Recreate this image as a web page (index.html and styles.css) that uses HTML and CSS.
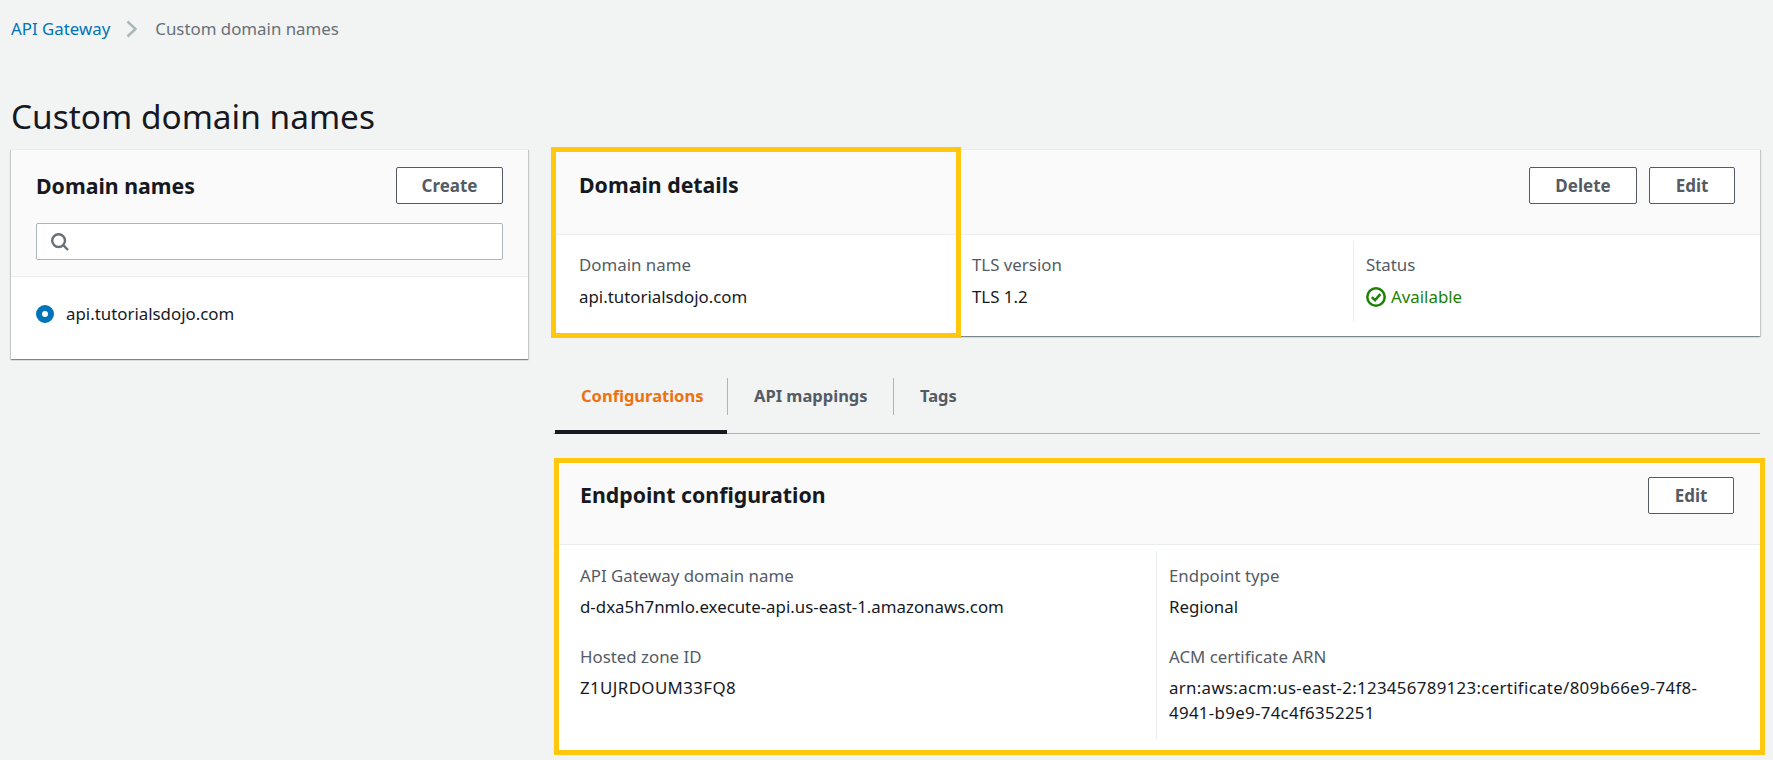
FILE: index.html
```html
<!DOCTYPE html>
<html lang="en">
<head>
<meta charset="utf-8">
<title>Custom domain names</title>
<link rel="stylesheet" href="styles.css">
</head>
<body>
<div class="page">
  <nav class="crumbs">
    <a class="crumb-link">API Gateway</a>
    <svg class="crumb-sep" viewBox="0 0 11 18"><path d="M1.5 1.5 9.5 9 1.5 16.5"/></svg>
    <span class="crumb-current">Custom domain names</span>
  </nav>
  <h1 class="page-title">Custom domain names</h1>
  <div class="layout">
    <aside class="panel side">
      <div class="side-head">
        <div class="side-top">
          <h2 class="panel-title">Domain names</h2>
          <button class="btn btn-create">Create</button>
        </div>
        <div class="search">
          <svg class="search-icon" viewBox="0 0 18 18"><circle cx="7.6" cy="7.6" r="6.4"/><path d="M12.2 12.2 17 17"/></svg>
        </div>
      </div>
      <div class="side-body">
        <span class="radio"></span>
        <span class="value-inline">api.tutorialsdojo.com</span>
      </div>
    </aside>
    <main class="content">
      <section class="panel details">
        <header class="panel-head">
          <h2 class="panel-title">Domain details</h2>
          <div class="actions">
            <button class="btn btn-delete">Delete</button>
            <button class="btn btn-edit">Edit</button>
          </div>
        </header>
        <div class="details-grid">
          <div class="col first">
            <div class="label">Domain name</div>
            <div class="value">api.tutorialsdojo.com</div>
          </div>
          <div class="col">
            <div class="label">TLS version</div>
            <div class="value">TLS 1.2</div>
          </div>
          <div class="col">
            <div class="label">Status</div>
            <div class="value status">
              <svg class="status-icon" viewBox="0 0 20 20"><circle cx="10" cy="10" r="8.7"/><path d="M5.8 10.2 9 13.2 14.4 7.2"/></svg>
              Available
            </div>
          </div>
        </div>
        <div class="mark mark-details"></div>
      </section>
      <div class="tabs">
        <a class="tab tab-config active">Configurations</a>
        <a class="tab tab-api">API mappings</a>
        <a class="tab tab-tags">Tags</a>
      </div>
      <section class="panel endpoint">
        <header class="panel-head">
          <h2 class="panel-title">Endpoint configuration</h2>
          <button class="btn btn-edit">Edit</button>
        </header>
        <div class="endpoint-grid">
          <div class="col first">
            <div class="label">API Gateway domain name</div>
            <div class="value">d-dxa5h7nmlo.execute-api.us-east-1.amazonaws.com</div>
            <div class="label spaced">Hosted zone ID</div>
            <div class="value zone">Z1UJRDOUM33FQ8</div>
          </div>
          <div class="col">
            <div class="label">Endpoint type</div>
            <div class="value">Regional</div>
            <div class="label spaced">ACM certificate ARN</div>
            <div class="value arn">arn:aws:acm:us-east-2:123456789123:certificate/809b66e9-74f8-4941-b9e9-74c4f6352251</div>
          </div>
        </div>
        <div class="mark mark-endpoint"></div>
      </section>
    </main>
  </div>
</div>
</body>
</html>
```
FILE: styles.css
```css
* { box-sizing: border-box; }
html, body { margin: 0; height: 100%; overflow: hidden; }
body {
  background: #f2f3f3;
  color: #16191f;
  font-family: "Noto Sans", "Open Sans", sans-serif;
  font-size: 16.85px;
  line-height: 25px;
}
.page { padding: 0 13px 0 11px; }

.crumbs { display: flex; align-items: center; height: 57px; }
.crumb-link { color: #0073bb; }
.crumb-sep { width: 11px; height: 18px; margin: 0 18px 0 16px; fill: none; stroke: #aab7b8; stroke-width: 2.4; }
.crumb-current { color: #687078; }

.page-title { margin: 0; height: 92px; padding-top: 43px; font-size: 33.4px; line-height: 32px; font-weight: 400; }

.layout { display: grid; grid-template-columns: 517px 1205px; column-gap: 27px; align-items: start; }

.panel {
  position: relative;
  background: #fff;
  border-top: 1px solid #eaeded;
  box-shadow: 0 1px 1px 0 rgba(0,28,36,.3), 1px 1px 1px 0 rgba(0,28,36,.15), -1px 1px 1px 0 rgba(0,28,36,.15);
}
.panel-title { margin: 0; font-size: 21.3px; line-height: 26px; font-weight: 700; }

.btn {
  height: 37px;
  padding: 0;
  background: #fff;
  border: 1px solid #545b64;
  border-radius: 2px;
  color: #545b64;
  font: 700 17px/25px "Noto Sans", "Open Sans", sans-serif;
}
.btn-create { width: 107px; }
.btn-delete { width: 108px; }
.btn-edit { width: 86px; }

.side { height: 210px; }
.side-head { height: 127px; padding: 17px 25px 0 25px; background: #fafafa; border-bottom: 1px solid #eaeded; }
.side-top { display: flex; justify-content: space-between; align-items: center; }
.search { height: 37px; margin-top: 19px; display: flex; align-items: center; padding-left: 14px; background: #fff; border: 1px solid #aab7b8; border-radius: 2px; }
.search-icon { width: 18px; height: 18px; fill: none; stroke: #687078; stroke-width: 2.4; }
.side-body { display: flex; align-items: center; gap: 12px; padding: 24px 25px 0 25px; }
.radio { width: 18px; height: 18px; border-radius: 50%; border: 6px solid #0073bb; background: #fff; }

.panel-head { display: flex; justify-content: space-between; align-items: flex-start; height: 85px; padding: 17px 25px 0 24px; background: #fafafa; border-bottom: 1px solid #eaeded; }
.panel-head .panel-title { margin-top: 5px; }
.actions { display: flex; gap: 12px; }

.details { height: 187px; }
.details-grid { display: grid; grid-template-columns: 404px 394px 1fr; padding-top: 6px; }
.details-grid .col { min-height: 81px; padding: 11px 13px 0 12px; border-left: 1px solid #eaeded; }
.details-grid .col.first { border-left: 0; padding-left: 24px; }
.label { color: #545b64; }
.value { margin-top: 7px; }
.value-inline { line-height: 25px; }
.status { display: flex; align-items: center; gap: 5px; color: #1d8102; }
.status-icon { width: 20px; height: 20px; fill: none; stroke: #1d8102; stroke-width: 2.5; }

.tabs { display: flex; height: 98px; padding-top: 42px; margin-left: -2px; border-bottom: 1px solid #aab7b8; margin-bottom: 25px; font-size: 16.5px; }
.tab { height: 37px; line-height: 35px; color: #545b64; font-weight: 700; border-right: 1px solid #aab7b8; }
.tab-config { width: 175px; padding-left: 28px; color: #ec7211; position: relative; }
.tab-config::after { content: ""; position: absolute; left: 2px; right: 0; top: 52px; height: 4px; background: #16191f; }
.tab-api { width: 166px; padding-left: 26px; }
.tab-tags { padding-left: 26px; border-right: 0; }

.endpoint { height: 293px; }
.endpoint .panel-head { padding-left: 25px; padding-right: 26px; }
.endpoint-grid { display: grid; grid-template-columns: 601px 1fr; padding-top: 6px; }
.endpoint-grid .col { min-height: 188px; padding: 12px 60px 0 12px; border-left: 1px solid #eaeded; }
.endpoint-grid .col.first { border-left: 0; padding-left: 25px; }
.endpoint-grid .value { margin-top: 6px; }
.spaced { margin-top: 25px; }
.zone { letter-spacing: .4px; }
.arn { letter-spacing: .32px; }

.mark { position: absolute; border: 5px solid #ffc70d; pointer-events: none; }
.mark-details { left: -4px; top: -3px; width: 410px; height: 191px; }
.mark-endpoint { left: -1px; top: -2px; right: -5px; bottom: -3px; }
```
